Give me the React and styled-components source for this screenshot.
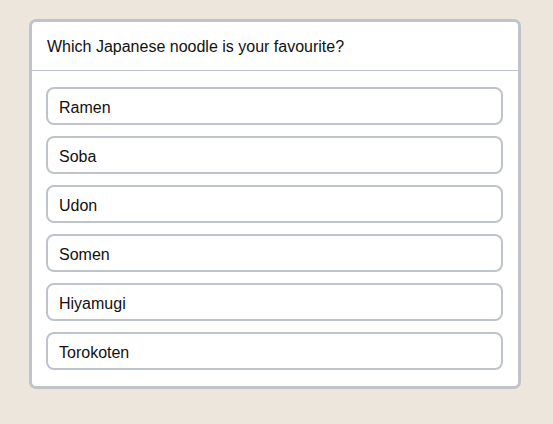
import React from 'react'
import styled, { createGlobalStyle } from 'styled-components'

const GlobalStyle = createGlobalStyle`
    html, body {
        margin: 0;
        padding: 0;
        background: #ede6dc;
    }
    body {
        font-family: "Liberation Sans", Arial, sans-serif;
    }
`

const noodles = ['Ramen', 'Soba', 'Udon', 'Somen', 'Hiyamugi', 'Torokoten']

function App() {
    return (
        <>
            <GlobalStyle />
            <Page>
                <Card>
                    <Question>Which Japanese noodle is your favourite?</Question>
                    <OptionList>
                        {noodles.map((name) => (
                            <Option key={name} type="button">{name}</Option>
                        ))}
                    </OptionList>
                </Card>
            </Page>
        </>
    )
}

const Page = styled.div`
    width: 553px;
    height: 424px;
    padding: 19px 0 0 29px;
    box-sizing: border-box;
`

const Card = styled.div`
    width: 492px;
    box-sizing: border-box;
    background: #ffffff;
    border: 3px solid #bfc4cb;
    border-radius: 7px;
    display: flex;
    flex-direction: column;
`

const Question = styled.div`
    height: 47px;
    display: flex;
    align-items: center;
    padding: 1px 0 0 15px;
    font-size: 16px;
    color: #111111;
    border-bottom: 1px solid #bfc4cb;
`

const OptionList = styled.div`
    display: flex;
    flex-direction: column;
    gap: 11px;
    padding: 16px 15px 16px 14px;
`

const Option = styled.button`
    height: 38px;
    box-sizing: border-box;
    display: flex;
    align-items: center;
    padding: 3px 0 0 11px;
    background: #ffffff;
    border: 2px solid #bfc4cb;
    border-radius: 8px;
    font-family: "Liberation Sans", Arial, sans-serif;
    font-size: 16px;
    color: #111111;
    text-align: left;
    cursor: pointer;
`

export default App
